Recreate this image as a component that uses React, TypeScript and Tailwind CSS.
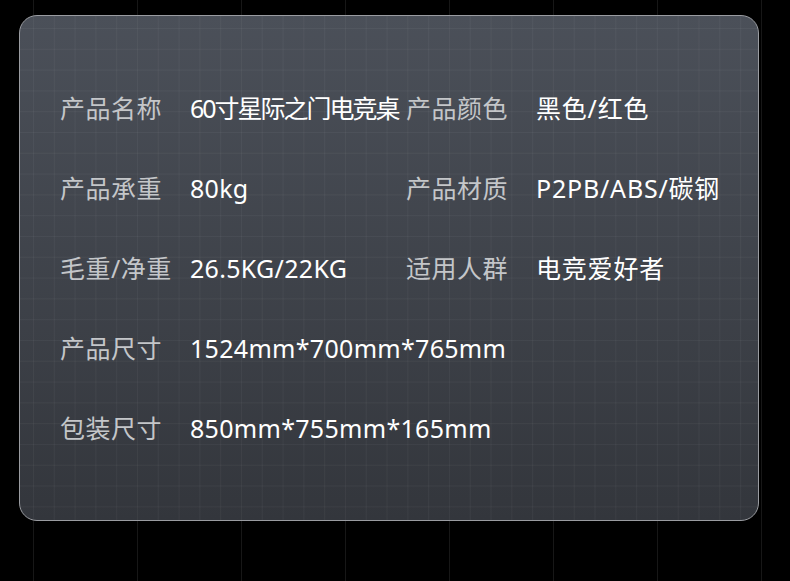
import React from 'react';

type Row = { l1: string; v1: string; l2?: string; v2?: string; tight?: boolean };

const rows: Row[] = [
  { l1: '产品名称', v1: '60寸星际之门电竞桌', l2: '产品颜色', v2: '黑色/红色', tight: true },
  { l1: '产品承重', v1: '80kg', l2: '产品材质', v2: 'P2PB/ABS/碳钢' },
  { l1: '毛重/净重', v1: '26.5KG/22KG', l2: '适用人群', v2: '电竞爱好者' },
  { l1: '产品尺寸', v1: '1524mm*700mm*765mm' },
  { l1: '包装尺寸', v1: '850mm*755mm*165mm' },
];

export default function App() {
  return (
    <div
      className="w-[790px] h-[581px] overflow-hidden bg-black pt-[15px] pl-[19px] [background-image:linear-gradient(to_right,#171717_1px,transparent_1px)] [background-size:104px_100%] [background-position:33px_0]"
      style={{ fontFamily: '"Noto Sans", "Noto Sans CJK SC", sans-serif' }}
    >
      {/* Spec card */}
      <div className="w-[740px] h-[506px] rounded-[18px] border border-[#9a9ca1] pt-[52px] pl-[40px] [background-image:linear-gradient(to_right,rgba(255,255,255,0.04)_1px,transparent_1px),linear-gradient(to_bottom,rgba(255,255,255,0.04)_1px,transparent_1px),linear-gradient(to_bottom,#4b5059,#33363c)] [background-size:20.8px_20.8px,20.8px_20.8px,100%_100%] [background-position:13px_0,0_12px,0_0]">
        {rows.map((r) => (
          <div key={r.l1} className="flex h-[80px] items-center text-[25px] leading-none">
            <span className="w-[130px] shrink-0 text-[#c4c6c9] tracking-[0.5px]">{r.l1}</span>
            <span
              className={`w-[216px] shrink-0 whitespace-nowrap text-white ${
                r.tight ? 'tracking-[-2px]' : 'tracking-[0.3px]'
              }`}
            >
              {r.v1}
            </span>
            {r.l2 && (
              <>
                <span className="w-[130px] shrink-0 text-[#c4c6c9] tracking-[0.5px]">{r.l2}</span>
                <span className="whitespace-nowrap text-white tracking-[0.8px]">{r.v2}</span>
              </>
            )}
          </div>
        ))}
      </div>
    </div>
  );
}
